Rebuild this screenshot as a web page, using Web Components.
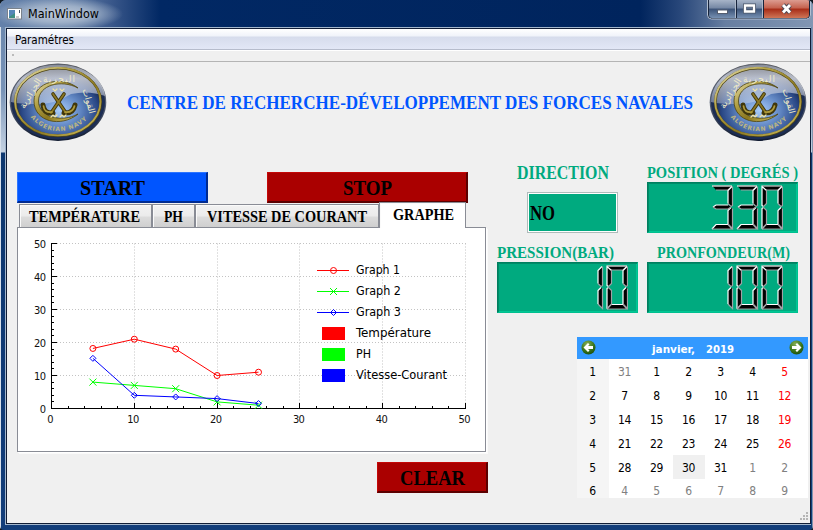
<!DOCTYPE html>
<html lang="fr">
<head>
<meta charset="utf-8">
<title>MainWindow</title>
<style>
html,body{margin:0;width:813px;height:530px;overflow:hidden;background:#101820}
</style>
</head>
<body>
<main-window></main-window>
<script>
const esc = s => s.replace(/&/g,'&amp;').replace(/</g,'&lt;');
function define(name, css, html) {
  customElements.define(name, class extends HTMLElement {
    constructor() { super(); this.attachShadow({mode:'open'}); }
    connectedCallback() {
      this.shadowRoot.innerHTML = `<style>*{box-sizing:border-box}${css}</style>` + (typeof html === 'function' ? html(this) : html);
    }
  });
}

/* One line of text fitted to a given width; h = line box, b = baseline. */
define('fit-text', `:host{display:block}svg{display:block;overflow:visible}`, el => {
  const a = (k,d) => el.getAttribute(k) ?? d, w = a('w',50), h = a('h',16), engraved = a('kind','ui') === 'deco';
  return `<svg width="${w}" height="${h}"><text x="0" y="${a('b',12)}" textLength="${w}" lengthAdjust="spacingAndGlyphs" fill="${a('color','#000')}" font-size="${a('size',12)}" font-weight="${a('weight', engraved ? 700 : 400)}" font-family="${engraved ? "'Liberation Serif',serif" : "'DejaVu Sans Condensed','DejaVu Sans',sans-serif"}">${esc(a('text',''))}</text></svg>`;
});

define('navy-logo', `:host{display:block;width:98px;height:80px}svg{display:block}text{font-family:'DejaVu Sans',sans-serif}`, `
<svg width="98" height="80" viewBox="0 0 98 80">
<defs>
<radialGradient id="b" cx=".52" cy=".62" r=".55"><stop offset="0" stop-color="#a9cdfb"/><stop offset=".42" stop-color="#6389c5"/><stop offset=".8" stop-color="#2a4886"/><stop offset="1" stop-color="#121f3d"/></radialGradient>
<linearGradient id="g" x1="0" y1="0" x2="1" y2="1"><stop offset="0" stop-color="#e9e3ba"/><stop offset=".3" stop-color="#b5a44a"/><stop offset=".6" stop-color="#8a7720"/><stop offset="1" stop-color="#d8c766"/></linearGradient>
<linearGradient id="s" x1="0" y1="0" x2="0" y2="1"><stop offset="0" stop-color="#8c909a" stop-opacity=".95"/><stop offset=".35" stop-color="#d3d6de" stop-opacity=".85"/><stop offset="1" stop-color="#d9e0ed" stop-opacity=".4"/></linearGradient>
<linearGradient id="e" x1="0" y1="0" x2="0" y2="1"><stop offset="0" stop-color="#55585e"/><stop offset=".5" stop-color="#555f74"/><stop offset="1" stop-color="#101a30"/></linearGradient>
</defs>
<ellipse cx="49" cy="40.200" rx="48.300" ry="38.800" fill="url(#e)"/>
<ellipse cx="49" cy="40" rx="47" ry="37.400" fill="#1c2d54"/>
<ellipse cx="49" cy="40" rx="43" ry="34.500" fill="url(#b)"/>
<path d="M2 40C3 18 23 2.500 49 2.500S95 18 96 34Q80 28 62 32Q45 43 25 42Q11 42 2 40Z" fill="url(#s)"/>
<ellipse cx="49" cy="40" rx="42.700" ry="33.800" fill="none" stroke="#514715" stroke-width="2.600"/>
<ellipse cx="48.800" cy="39.600" rx="42.700" ry="33.800" fill="none" stroke="url(#g)" stroke-width="1.900"/>
<path d="M69 26C52 13 25 20 25 39C25 60 52 66 69 52C53 61 29.500 55 29.500 39C29.500 23 52 17 69 26Z" fill="url(#g)" stroke="#4c430f" stroke-width=".8"/>
<g fill="none" stroke-linecap="round"><g stroke="#40370c" stroke-width="3.600"><path d="M44 32L57 51M55 32L42 51"/><path d="M34 43Q35 52 44 51M66 43Q64 52 55 51" stroke-width="5"/></g>
<g stroke="#8c7822" stroke-width="1.700"><path d="M44 32L57 51M55 32L42 51"/><path d="M34.500 44Q35 51 43 50M65.500 44Q64 51 56 50" stroke="#b09c3c"/></g>
<path d="M44 27l2 2 2-2M51 27l2 2 2-2M42 55l2-2 2 2 2-2M51 55l2-2 2 2 2-2" stroke="#efe3a5" stroke-width="1.200"/></g>
<g fill="#f0eac6" font-size="9"><text transform="translate(50 20)" text-anchor="middle" textLength="32">البحرية</text>
<text transform="translate(77 40) rotate(74)" text-anchor="middle">القوات</text>
<text transform="translate(24 33) rotate(-58)" text-anchor="middle">الجزائرية</text></g>
<path id="arc" d="M21 54Q32 69 50 69T80 55" fill="none"/>
<text fill="#bdb682" font-size="6" font-weight="700"><textPath href="#arc" textLength="64" startOffset="1">ALGERIAN NAVY</textPath></text>
</svg>`);

define('title-bar', `:host{display:flex;height:27px;padding:0 2px 0 7px;justify-content:space-between;
background:radial-gradient(ellipse 65px 17px at 58px 14px,#bfcada 0,#9dafc7 50%,transparent 100%),linear-gradient(90deg,#6481aa 0,#627ea7 70px,#39578a 112px,#012864 160px,#00245d 640px,#28477a 680px,#677ea1 725px,#8296b3 813px)}
.l{display:flex;gap:6px;padding-top:6px}`, `
<div class="l"><svg width="15" height="14"><rect x=".5" y="2.500" width="14" height="10.500" fill="#fff" stroke="#7a828c"/><rect x="2" y="4" width="6" height="8" fill="#3f8f82"/><path d="M2 4h6v3l-6 4z" fill="#5487b8"/><path d="M12.500 4v3" stroke="#456"/><path d="M9 11h3" stroke="#ccc" stroke-width="2"/></svg>
<fit-text text="MainWindow" w="71" size="12" b="12" h="16"></fit-text></div>
<svg width="104" height="20"><defs><linearGradient id="a" x1="0" y1="0" x2="0" y2="1"><stop offset="0" stop-color="#a7b4c8"/><stop offset=".45" stop-color="#7487a3"/><stop offset=".5" stop-color="#3b5277"/><stop offset="1" stop-color="#7690b2"/></linearGradient><linearGradient id="r" x1="0" y1="0" x2="0" y2="1"><stop offset="0" stop-color="#dc9c90"/><stop offset=".45" stop-color="#c4614d"/><stop offset=".5" stop-color="#a72c17"/><stop offset="1" stop-color="#cf7657"/></linearGradient></defs>
<path d="M.5 0V15Q.5 19 4.500 19H99.500Q103.500 19 103.500 15V0" fill="#17243c" stroke="#b3bfd1"/>
<path d="M2 0H28V18H5Q2 18 2 15Z" fill="url(#a)"/><path d="M30 0H55V18H30Z" fill="url(#a)"/><path d="M57 0H102V15Q102 18 99 18H57Z" fill="url(#r)"/>
<path d="M28.500 0V18M55.500 0V18" stroke="#aeb9c9"/>
<rect x="10.500" y="10" width="10" height="3.500" fill="#fff" stroke="#555e70"/>
<path d="M38 5.500h9v6h-9z" fill="none" stroke="#4d586b" stroke-width="4"/><path d="M38 5.500h9v6h-9z" fill="none" stroke="#fff" stroke-width="2.300"/>
<path d="M76 5L83 12.500M83 5L76 12.500" stroke="#514a54" stroke-width="4.800"/><path d="M76 5L83 12.500M83 5L76 12.500" stroke="#fff" stroke-width="2.800"/></svg>`);

define('menu-bar', `:host{display:block;height:33px}
.m{height:21px;padding:3px 8px;background:linear-gradient(#fff 0,#f0f3fa 7px,#d6dcec 8px,#e2e7f6 20px);border-bottom:1px solid #b6bccc}
.t{height:12px;background:#f0f0f0;border-top:1px solid #fff;border-bottom:1px solid #b4b4b4;padding:3px 5px}.t i{display:block;width:2px;height:2px;background:#bbb}`,
`<div class="m"><fit-text text="Paramétres" w="59" size="12" b="12"></fit-text></div><div class="t"><i></i></div>`);

define('push-button', `:host{display:flex;justify-content:center;height:31px;padding-top:6px;background:var(--c);border:1px solid var(--hi);border-right:2px solid var(--lo);border-bottom:2px solid var(--lo)}`,
 el => `<fit-text kind="deco" text="${el.getAttribute('label')}" w="${el.getAttribute('w')}" size="21" b="16" h="20"></fit-text>`);

define('tab-item', `:host{display:block;height:23px;padding:4px 0 0 9px;background:linear-gradient(#f2f2f2 0,#ebebeb 11px,#dcdcdc 12px,#cfcfcf 100%);border:1px solid #898c95;border-bottom:0;box-shadow:inset 1px 1px #fafafa}
:host([on]){height:26px;background:#fff;padding:4px 0 0 13px;margin-bottom:-1px;position:relative}`,
 el => `<fit-text kind="deco" text="${el.getAttribute('label')}" w="${el.getAttribute('w')}" size="17" b="12.500" h="16"></fit-text>`);

define('line-chart', `:host{display:block}svg{display:block}text{font:11px 'DejaVu Sans Condensed','DejaVu Sans',sans-serif;fill:#111}.lg text{font-size:12px;fill:#000}`, () => {
  const X = v => 33.5 + v*8.28, Y = v => 180.5 - v*3.3;
  let o = '';
  for (let v=10; v<=50; v+=10) o += `<path d="M${Math.floor(X(v))+.5} 15.500V181M33 ${Y(v)}H448" stroke="#c3c3c3" stroke-dasharray="1 2"/>`;
  for (let v=0; v<=50; v+=2) { const n = v%10 ? 2 : 5; o += `<path d="M${Math.floor(X(v))+.5} 181v-${n+1}M33 ${Math.round(Y(v)-.5)+.5}h${n+1}" stroke="#000"/>`; }
  o += `<path d="M33.500 15V180.500H448" fill="none" stroke="#000"/>`;
  for (let v=0; v<=50; v+=10) o += `<text x="${X(v)-1}" y="194.500" text-anchor="middle" textLength="${v?12:6}">${v}</text><text x="28" y="${Y(v)+4.5}" text-anchor="end" textLength="${v?12:6}">${v}</text>`;
  const mark = [(x,y)=>`<circle cx="${x}" cy="${y}" r="3"/>`, (x,y)=>`<path d="M${x-3.5} ${y-3.5}l7 7m0-7l-7 7"/>`, (x,y)=>`<path d="M${x} ${y-3}l3 3-3 3-3-3z"/>`];
  const data = [['#f00',[18.2,21,18,10,11]],['#0f0',[8,7,6,2,1]],['#00f',[15.2,4,3.5,3,1.5]]];
  data.forEach(([c,d],i) => { o += `<g fill="none" stroke="${c}"><path d="M${d.map((v,k)=>X(5*k+5)+' '+Y(v)).join('L')}"/>${d.map((v,k)=>mark[i](X(5*k+5),Y(v))).join('')}</g>`; });
  o += '<g class="lg">';
  [['Graph 1',44],['Graph 2',45],['Graph 3',45],['Température',75],['PH',15],['Vitesse-Courant',91]].forEach(([t,w],i) => {
    const y = 42.5 + i*21, c = data[i%3][0];
    o += i<3 ? `<g fill="none" stroke="${c}"><path d="M299 ${y}h32"/>${mark[i](315.5,y)}</g>` : `<path d="M304 ${y-6.5}h23v13h-23z" fill="${c}"/>`;
    o += `<text x="338" y="${y+3.5}" textLength="${w}" lengthAdjust="spacingAndGlyphs">${t}</text>`;
  });
  return `<svg width="467" height="222">${o}</g></svg>`;
});

define('lcd-number', `:host{display:flex;justify-content:flex-end;height:51px;padding:2px var(--gap,14px) 0 0;background:#00aa7f;border:1px solid #007f5f;border-right-color:#00bf8f;border-bottom-color:#00bf8f;box-shadow:inset 1px 1px #008b68,inset -1px -1px #00c794}`, el => {
  /* Every segment: body, lit edge, shaded edge, inside a 21x44 digit cell. */
  const S = {
    a:['0,0 20,0 16,4.500 4,4.500','M0 .5H20','M4 4.500H16L20 1'],
    b:['20.500,1 20.500,20 19,21 16,18 16,5','M16 18V5L20 1','M20.500 1V20L19 21L16 18'],
    c:['19,22 20.500,23 20.500,43 16,38.500 16,25','M16 38.500V25L19 22','M20.500 23V43L16 38.500'],
    d:['4,39 16,39 20,43.500 0,43.500','M0 43.500L4 39H16','M0 43.500H20L16 39'],
    e:['0,23 1.500,22 4.500,25 4.500,38.500 0,43','M0 43V23L1.500 22','M1.500 22L4.500 25V38.500L0 43'],
    f:['0,1 4.500,5 4.500,18 1.500,21 0,20','M1.500 21L0 20V1L4.500 5','M4.500 5V18L1.500 21'],
    g:['1,21.500 4,19.500 16,19.500 19,21.500 16,23.500 4,23.500','M1 21.500L4 19.500H16','M1 21.500L4 23.500H16L19 21.500']};
  const M = {0:'abcdef',1:'bc',3:'abcdg'};
  const t = el.getAttribute('value'), w = t.length*25;
  return `<svg width="${w}" height="46">${[...t].map((d,i)=>`<g transform="translate(${i*25+4} .5)">${[...M[d]].map(k=>`<polygon points="${S[k][0]}"/><path d="${S[k][1]}" fill="none" stroke="#fff" stroke-width="1.200"/><path d="${S[k][2]}" fill="none" stroke="#a0a0a4" stroke-width="1.200"/>`).join('')}</g>`).join('')}</svg>`;
});

define('month-calendar', `:host{display:block;width:231px;height:161px;background:#fff;font:12px 'DejaVu Sans Condensed','DejaVu Sans',sans-serif;overflow:hidden}
header{height:22px;background:#3399ff;display:flex;justify-content:space-between;padding:3px 4px}
.n{display:flex;gap:11px;padding-top:1px}
.g{display:grid;grid-template-columns:repeat(7,32px);grid-template-rows:repeat(5,24px) 19px;height:139px;background:linear-gradient(90deg,#f5f5f5 32px,#fff 32px)}
.g div{display:flex;align-items:center;justify-content:center;padding:2px 1px 0 0;letter-spacing:-.3px}.o{color:#808080}.r{color:#f00}.t{background:#f0f0f0}.g div:nth-last-child(-n+7){padding-top:4px}`, () => {
  const arrow = f => `<svg width="15" height="15" viewBox="0 0 15 15"><defs><radialGradient id="q" cx=".4" cy=".25" r=".8"><stop offset="0" stop-color="#83ad55"/><stop offset=".6" stop-color="#39751c"/><stop offset="1" stop-color="#194d0b"/></radialGradient></defs><circle cx="7.500" cy="7.500" r="7" fill="url(#q)"/><path ${f?'transform="matrix(-1 0 0 1 15 0)"':''} d="M2.500 7.500L7 3L8.500 4.500L7 6H12V9H7L8.500 10.500L7 12Z" fill="#fff"/></svg>`;
  const rows = [[31,1,2,3,4,5],[7,8,9,10,11,12],[14,15,16,17,18,19],[21,22,23,24,25,26],[28,29,30,31,1,2],[4,5,6,7,8,9]];
  return `<header>${arrow(0)}<div class="n"><fit-text text="janvier," w="43" size="11" weight="700" b="12" color="#fff"></fit-text><fit-text text="2019" w="28" size="11" weight="700" b="12" color="#fff"></fit-text></div>${arrow(1)}</header><div class="g">${rows.map((r,i)=>`<div>${i+1}</div>`+r.map((d,k)=>`<div class="${(i==0&&k==0)||(i==4&&k>3)||i==5?'o':k==5?'r':''}${i==4&&k==2?' t':''}">${d}</div>`).join('')).join('')}</div>`;
});

define('reading-field', `:host{display:flex;flex-direction:column}::slotted(*){flex:none}`,
 el => `<fit-text kind="deco" color="#00aa7f" text="${el.getAttribute('label')}" w="${el.getAttribute('w')}" size="${el.getAttribute('size')||17}" b="${el.getAttribute('b')||12}" h="16" style="padding-left:${el.getAttribute('pad')||0}px"></fit-text><slot></slot>`);

define('main-window', `:host{display:flex;flex-direction:column;width:813px;height:530px;overflow:hidden;border-radius:6px 6px 4px 4px;background:linear-gradient(90deg,#d7e0eb 0 1px,transparent 1px 812px,#8395ae 812px),linear-gradient(#6784ab 0,#7893b7 90px,#b6c6da 140px,#c4d1e0 152px,#0d376f 153px,#123d7a 100%)}
.body{flex:none;width:806px;height:498px;margin:0 0 0 5px;border:1px solid #a4b7cd;padding:0;background:#101c35}
.client{margin:1px;width:803px;height:494px;background:#f0f0f0;outline:1px solid #101c35}
.head{display:flex;align-items:flex-start;height:110px;padding:0 3px 0 2px;gap:20px}
.head fit-text{padding-top:31px}.head navy-logo:last-child{margin-left:-4px}
.main{display:flex;gap:9px;padding-left:10px}
.left{width:471px}.btns{display:flex;gap:59px;height:31px}
.blue{--c:#0055ff;--hi:#2c75ff;--lo:#002b91}.red{--c:#aa0000;--hi:#c40707;--lo:#5b0000}
.tabs{display:flex;align-items:flex-end;height:23px;padding-left:2px;margin-top:1px}
.panel{width:469px;height:225px;border:1px solid #898c95;background:#fff;box-shadow:1px 1px #fff,2px 2px #fafafa}
.clear{display:flex;justify-content:flex-end;margin-top:10px}
.right{width:311px;display:grid;grid-template-columns:141px 151px;column-gap:9px;grid-template-rows:80px 80px auto;margin-top:-6px}
.no{margin:10px 0 0 30px;width:91px;height:41px;background:#00aa7f;border:1px solid #aebcba;box-shadow:inset 0 0 0 1px #fff;padding:10px 2px}
.cal{grid-column:1/3;padding:11px 0 0 80px;width:311px}
.grip{display:flex;justify-content:flex-end;height:0}`, `
<title-bar></title-bar><div class="body"><div class="client"><menu-bar></menu-bar>
<div class="head"><navy-logo></navy-logo><fit-text kind="deco" color="#0055ff" text="CENTRE DE RECHERCHE-DÉVELOPPEMENT DES FORCES NAVALES" w="566" size="19" b="16" h="22"></fit-text><navy-logo></navy-logo></div>
<div class="main"><div class="left">
<div class="btns"><push-button class="blue" style="width:191px" label="START" w="65"></push-button><push-button class="red" style="width:201px" label="STOP" w="49"></push-button></div>
<div class="tabs"><tab-item style="width:133px" label="TEMPÉRATURE" w="111"></tab-item><tab-item style="width:43px;padding-left:11px" label="PH" w="19"></tab-item><tab-item style="width:184px;padding-left:11px" label="VITESSE DE COURANT" w="160"></tab-item><tab-item on style="width:87px" label="GRAPHE" w="61"></tab-item></div>
<div class="panel"><line-chart></line-chart></div>
<div class="clear"><push-button class="red" style="width:111px" label="CLEAR" w="65"></push-button></div></div>
<div class="right">
<reading-field label="DIRECTION" w="92" size="19" b="13" pad="20"><div class="no"><fit-text kind="deco" text="NO" w="25" size="21" b="17" h="20"></fit-text></div></reading-field>
<reading-field label="POSITION ( DEGRÉS )" w="151" size="16"><lcd-number value="330"></lcd-number></reading-field>
<reading-field label="PRESSION(BAR)" w="117" size="16"><lcd-number value="10" style="--gap:9px"></lcd-number></reading-field>
<reading-field label="PRONFONDEUR(M)" w="133" size="16" pad="10"><lcd-number value="100"></lcd-number></reading-field>
<div class="cal"><month-calendar></month-calendar></div></div></div>
<div class="grip"><svg width="12" height="12" style="margin-top:13px"><path d="M8 2h2M5 5h2M8 5h2M2 8h2M5 8h2M8 8h2" stroke="#b5b5b5" stroke-width="2"/></svg></div>
</div></div>`);
</script>
</body>
</html>
